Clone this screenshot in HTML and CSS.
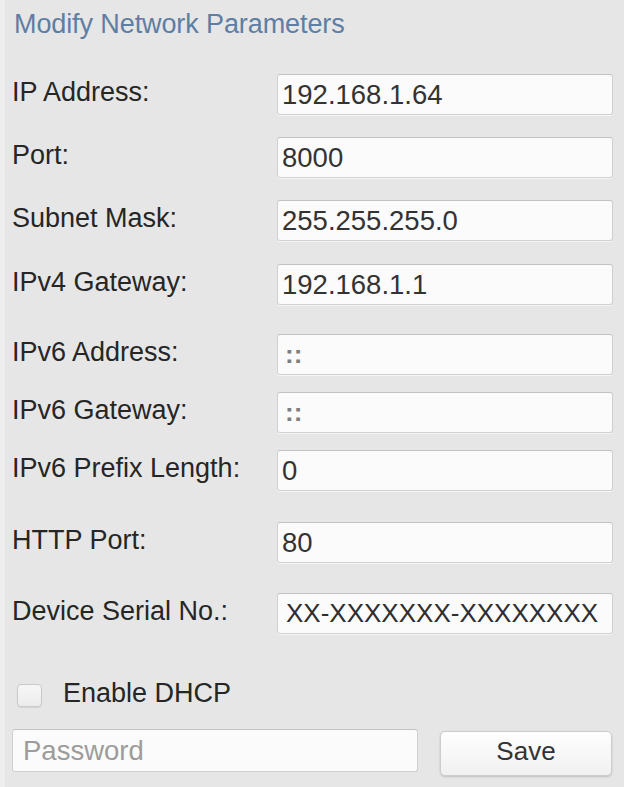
FILE: index.html
```html
<!DOCTYPE html>
<html lang="en">
<head>
<meta charset="utf-8">
<title>Modify Network Parameters</title>
<link rel="stylesheet" href="styles.css">
</head>
<body>
<div class="panel">
  <h1 class="title">Modify Network Parameters</h1>
  <div class="fields">
    <div class="row">
      <label class="label">IP Address:</label>
      <input class="field" type="text" value="192.168.1.64">
    </div>
    <div class="row">
      <label class="label">Port:</label>
      <input class="field" type="text" value="8000">
    </div>
    <div class="row">
      <label class="label">Subnet Mask:</label>
      <input class="field" type="text" value="255.255.255.0">
    </div>
    <div class="row row-gap-23">
      <label class="label">IPv4 Gateway:</label>
      <input class="field" type="text" value="192.168.1.1">
    </div>
    <div class="row row-gap-29">
      <label class="label">IPv6 Address:</label>
      <input class="field field-muted" type="text" value="::">
    </div>
    <div class="row row-gap-17">
      <label class="label">IPv6 Gateway:</label>
      <input class="field field-muted" type="text" value="::">
    </div>
    <div class="row row-gap-17">
      <label class="label">IPv6 Prefix Length:</label>
      <input class="field" type="text" value="0">
    </div>
    <div class="row row-gap-31">
      <label class="label">HTTP Port:</label>
      <input class="field" type="text" value="80">
    </div>
    <div class="row row-gap-30">
      <label class="label">Device Serial No.:</label>
      <input class="field field-serial" type="text" value="XX-XXXXXXX-XXXXXXXX">
    </div>
  </div>
  <label class="check">
    <span class="check-box"></span>
    <span class="check-text">Enable DHCP</span>
  </label>
  <div class="actions">
    <input class="password" type="password" placeholder="Password">
    <button class="save" type="button">Save</button>
  </div>
</div>
</body>
</html>
```
FILE: styles.css
```css
html, body {
  margin: 0;
  padding: 0;
  background: #e6e6e6;
}

body {
  font-family: "Liberation Sans", Arial, sans-serif;
  color: #2b2b2b;
}

.panel {
  box-sizing: border-box;
  width: 624px;
  height: 787px;
  border-left: 5px solid #eeeeee;
  padding: 9px 11px 0 7px;
  background: #e6e6e6;
}

.title {
  margin: 0 0 0 2px;
  font-size: 27px;
  font-weight: normal;
  line-height: 31px;
  color: #5e7ea4;
  letter-spacing: -0.1px;
}

.fields {
  display: flex;
  flex-direction: column;
  gap: 22px;
  margin-top: 34px;
}

.row {
  display: flex;
  align-items: center;
  height: 41px;
}

.row-gap-23 { margin-top: 1px; }
.row-gap-29 { margin-top: 7px; }
.row-gap-17 { margin-top: -5px; }
.row-gap-31 { margin-top: 9px; }
.row-gap-30 { margin-top: 8px; }

.label {
  width: 265px;
  padding-bottom: 5px;
  font-size: 27px;
  line-height: 31px;
  color: #262626;
}

.field {
  box-sizing: border-box;
  width: 336px;
  height: 41px;
  margin: 0;
  padding: 0 0 0 4px;
  border: 1px solid #d0d0d0;
  border-top-color: #c2c2c2;
  border-radius: 3px;
  background: #fbfbfb;
  box-shadow: 0 1px 0 rgba(255, 255, 255, 0.6);
  font-family: "Liberation Sans", Arial, sans-serif;
  font-size: 27.5px;
  color: #333333;
  outline: none;
}

.field-muted {
  padding-left: 7px;
  color: #7e7e7e;
  font-size: 26px;
  font-weight: bold;
}

.field-serial {
  padding-left: 8px;
  font-size: 26px;
  color: #2e2e2e;
}

.check {
  display: flex;
  align-items: center;
  height: 31px;
  margin-top: 44px;
  padding-left: 5px;
}

.check-box {
  box-sizing: border-box;
  width: 25px;
  height: 23px;
  margin-top: 3px;
  border: 1px solid #cacaca;
  border-radius: 4px;
  background: linear-gradient(#f6f6f6, #ececec);
  box-shadow: 0 1px 1px rgba(0, 0, 0, 0.08);
}

.check-text {
  margin-left: 21px;
  font-size: 27px;
  line-height: 31px;
  color: #262626;
}

.actions {
  display: flex;
  align-items: flex-start;
  gap: 22px;
  margin-top: 20px;
}

.password {
  box-sizing: border-box;
  width: 406px;
  height: 43px;
  margin: 0;
  padding: 0 0 0 10px;
  border: 1px solid #d0d0d0;
  border-top-color: #c4c4c4;
  border-radius: 3px;
  background: #fbfbfb;
  font-family: "Liberation Sans", Arial, sans-serif;
  font-size: 27.5px;
  color: #333333;
  outline: none;
}

.password::placeholder {
  color: #9c9c9c;
}

.save {
  box-sizing: border-box;
  width: 172px;
  height: 45px;
  margin: 2px 0 0 0;
  padding: 0 0 4px 0;
  border: 1px solid #cdcdcd;
  border-radius: 5px;
  background: linear-gradient(#fefefe, #f1f1f1);
  box-shadow: 0 1px 2px rgba(0, 0, 0, 0.18);
  font-family: "Liberation Sans", Arial, sans-serif;
  font-size: 26px;
  color: #333333;
}
```
